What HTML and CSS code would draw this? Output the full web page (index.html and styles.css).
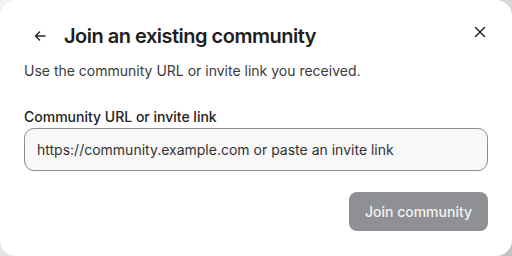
FILE: index.html
```html
<!DOCTYPE html>
<html>
<head>
<meta charset="utf-8">
<link rel="stylesheet" href="styles.css">
</head>
<body>
<div class="dialog">
  <div class="header">
    <button class="icon-btn back" aria-label="Back">
      <svg width="16" height="16" viewBox="0 0 16 16" fill="none" stroke="#2a2a2a" stroke-width="1.5" stroke-linecap="round" stroke-linejoin="round"><path d="M13 8H3.5M7.5 4L3.5 8l4 4"/></svg>
    </button>
    <h1 class="title">Join an existing community</h1>
    <button class="icon-btn close" aria-label="Close">
      <svg width="12" height="12" viewBox="0 0 12 12" fill="none" stroke="#2a2a2a" stroke-width="1.5" stroke-linecap="round"><path d="M1.5 1.5l9 9M10.5 1.5l-9 9"/></svg>
    </button>
  </div>
  <p class="subtitle">Use the community URL or invite link you received.</p>
  <label class="label">Community URL or invite link</label>
  <div class="input">https://community.example.com or paste an invite link</div>
  <div class="actions">
    <button class="primary">Join community</button>
  </div>
</div>
</body>
</html>
```
FILE: styles.css
```css
html, body {
  margin: 0;
  width: 512px;
  height: 256px;
  overflow: hidden;
}
body {
  background: linear-gradient(135deg, #f2f2f2 0%, #dcdcdc 60%, #c4c4c4 100%);
  font-family: Inter, "Noto Sans", sans-serif;
}
.dialog {
  box-sizing: border-box;
  width: 512px;
  height: 256px;
  background: #fff;
  border-radius: 16px;
  padding: 20px 24px 24px;
  display: flex;
  flex-direction: column;
}
.header {
  display: flex;
  align-items: center;
  height: 32px;
}
.icon-btn {
  border: 0;
  background: none;
  padding: 0;
  display: flex;
  align-items: center;
  justify-content: center;
}
.back {
  width: 32px;
  height: 32px;
  margin-right: 8px;
}
.title {
  margin: 0;
  font-size: 20px;
  font-weight: 600;
  color: #1e1e1e;
  letter-spacing: -0.5px;
  flex: 1;
}
.close {
  width: 24px;
  height: 24px;
  margin-top: -8px;
  margin-right: -4px;
}
.subtitle {
  margin: 9px 0 0;
  font-size: 14px;
  line-height: 20px;
  color: #3a3a3a;
}
.label {
  margin-top: 26px;
  font-size: 14px;
  line-height: 20px;
  font-weight: 500;
  color: #222;
}
.input {
  box-sizing: border-box;
  margin-top: 1px;
  height: 43px;
  border: 1px solid #8c8c8c;
  border-radius: 10px;
  background: #f8f8f8;
  padding: 0 12px;
  display: flex;
  align-items: center;
  font-size: 14px;
  color: #333;
}
.actions {
  display: flex;
  justify-content: flex-end;
  margin-top: 21px;
}
.primary {
  height: 39px;
  width: 139px;
  border: 0;
  border-radius: 8px;
  background: #8e9093;
  color: #f2f2f2;
  font-family: Inter, "Noto Sans", sans-serif;
  font-size: 14px;
  font-weight: 500;
}
```
